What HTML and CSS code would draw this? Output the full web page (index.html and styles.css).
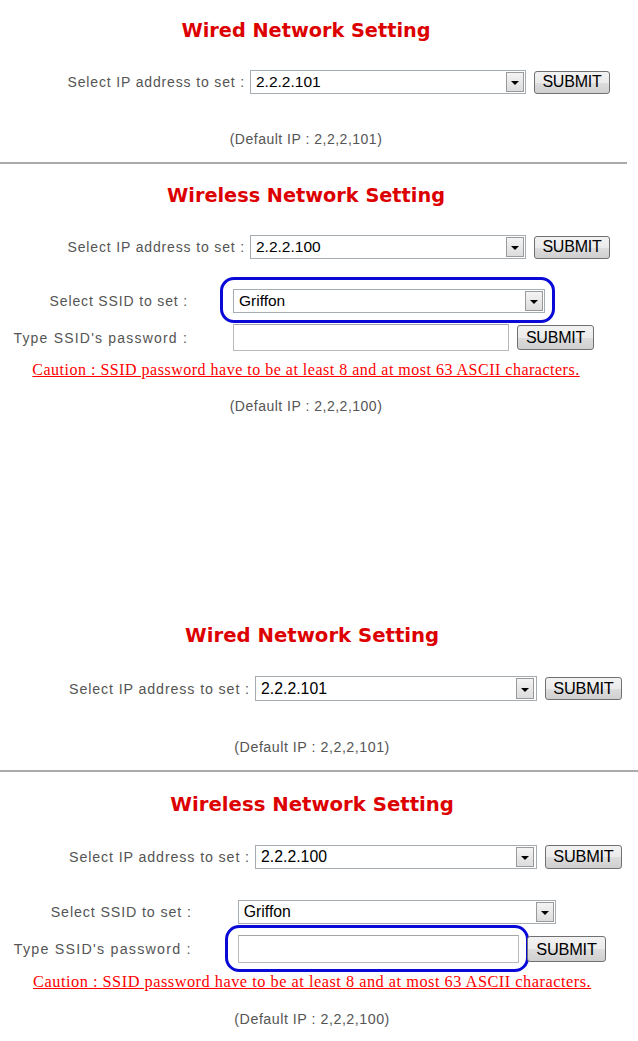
FILE: index.html
```html
<!DOCTYPE html>
<html lang="en">

<head>
    <meta charset="UTF-8">
    <meta name="viewport" content="width=device-width, initial-scale=1.0">
    <title>Network Setting</title>
    <link rel="stylesheet" href="styles.css">
</head>

<body>
    <div class="shot">
        <div class="block">
            <h2 class="title">Wired Network Setting</h2>
            <div class="row">
                <span class="label label-ip">Select IP address to set :</span>
                <span class="select select-ip">2.2.2.101<span class="arrow"></span></span>
                <button class="submit">SUBMIT</button>
            </div>
            <p class="default">(Default IP : 2,2,2,101)</p>
        </div>
        <hr>
        <div class="block block-wireless">
            <h2 class="title">Wireless Network Setting</h2>
            <div class="row">
                <span class="label label-ip">Select IP address to set :</span>
                <span class="select select-ip">2.2.2.100<span class="arrow"></span></span>
                <button class="submit">SUBMIT</button>
            </div>
            <div class="row row-ssid">
                <span class="label label-ssid">Select SSID to set :</span>
                <span class="mark">
                    <span class="select select-ssid">Griffon<span class="arrow"></span></span>
                </span>
            </div>
            <div class="row row-pass">
                <span class="label label-ssid label-pass">Type SSID's password :</span>
                <span class="input"></span>
                <button class="submit submit-pass">SUBMIT</button>
            </div>
            <p class="caution">Caution : SSID password have to be at least 8 and at most 63 ASCII characters.</p>
            <p class="default default-last">(Default IP : 2,2,2,100)</p>
        </div>
    </div>

    <div class="shot shot-second">
        <div class="block">
            <h2 class="title">Wired Network Setting</h2>
            <div class="row">
                <span class="label label-ip">Select IP address to set :</span>
                <span class="select select-ip">2.2.2.101<span class="arrow"></span></span>
                <button class="submit">SUBMIT</button>
            </div>
            <p class="default">(Default IP : 2,2,2,101)</p>
        </div>
        <hr>
        <div class="block block-wireless">
            <h2 class="title">Wireless Network Setting</h2>
            <div class="row">
                <span class="label label-ip">Select IP address to set :</span>
                <span class="select select-ip">2.2.2.100<span class="arrow"></span></span>
                <button class="submit">SUBMIT</button>
            </div>
            <div class="row row-ssid">
                <span class="label label-ssid">Select SSID to set :</span>
                <span class="select select-ssid">Griffon<span class="arrow"></span></span>
            </div>
            <div class="row row-pass">
                <span class="label label-ssid label-pass">Type SSID's password :</span>
                <span class="mark mark-input">
                    <span class="input"></span>
                </span>
                <button class="submit submit-pass">SUBMIT</button>
            </div>
            <p class="caution">Caution : SSID password have to be at least 8 and at most 63 ASCII characters.</p>
            <p class="default default-last">(Default IP : 2,2,2,100)</p>
        </div>
    </div>
</body>

</html>
```

FILE: styles.css
```css
body {
    margin: 0;
    background-color: #ffffff;
    font-family: "Liberation Sans", Arial, sans-serif;
    overflow: hidden;
}

.shot {
    width: 627px;
    height: 605px;
}

/* second capture is a little bigger */
.shot-second {
    zoom: 1.02;
    height: 430px;
}

.block {
    padding-right: 15px;
    padding-top: 19px;
}

.block-wireless {
    padding-top: 20px;
}

hr {
    margin: 15px 0 0 0;
    height: 2px;
    border: none;
    background-color: #aaaaaa;
}

.title {
    margin: 0;
    text-align: center;
    font-family: "DejaVu Sans", Verdana, sans-serif;
    font-size: 19.3px;
    line-height: 24px;
    font-weight: bold;
    color: #dd0000;
}

.row {
    display: flex;
    align-items: center;
    margin-top: 27px;
    height: 24px;
}

.label {
    text-align: right;
    font-size: 14px;
    color: #555555;
    letter-spacing: 0.85px;
    white-space: nowrap;
}

.label-ip {
    width: 245px;
    margin-right: 5px;
}

.label-ssid {
    width: 188px;
    margin-right: 45px;
}

.label-pass {
    letter-spacing: 1.2px;
}

.select {
    display: flex;
    align-items: center;
    box-sizing: border-box;
    height: 24px;
    padding-left: 5px;
    border: 1px solid #a5acb2;
    font-size: 15.5px;
    color: #000000;
    position: relative;
}

.select-ip {
    width: 276px;
}

.select-ssid {
    width: 312px;
}

.arrow {
    position: absolute;
    right: 1px;
    top: 1px;
    bottom: 1px;
    width: 18px;
    box-sizing: border-box;
    border: 1px solid #9a9a9a;
    background: linear-gradient(#f4f4f4, #dcdcdc);
}

.arrow::after {
    content: "";
    position: absolute;
    left: 4px;
    top: 8px;
    border-left: 4px solid transparent;
    border-right: 4px solid transparent;
    border-top: 4px solid #000000;
}

.submit {
    margin-left: 8px;
    width: 76px;
    height: 23px;
    padding: 0;
    border: 1px solid #707070;
    border-radius: 3px;
    background: linear-gradient(#f2f2f2, #ebebeb 50%, #dddddd 51%, #cfcfcf);
    font-family: "Liberation Sans", Arial, sans-serif;
    font-size: 16px;
    color: #000000;
    letter-spacing: -0.2px;
}

.row-ssid {
    margin-top: 30px;
}

.row-pass {
    margin-top: 11px;
    height: 27px;
}

.input {
    display: block;
    box-sizing: border-box;
    width: 276px;
    height: 27px;
    border: 1px solid #b9b9b9;
    border-top-color: #a5a5a5;
    background-color: #ffffff;
}

.submit-pass {
    width: 77px;
    height: 25px;
}

/* blue circle drawn around the control that is talked about */
.mark {
    display: block;
    margin: -12px -10px -10px -13px;
    padding: 9px 7px 7px 10px;
    border: 3px solid #0a0ad8;
    border-radius: 14px;
}

.mark-input {
    margin: -10px -10px -9px -12px;
    padding: 7px 7px 6px 9px;
}

.caution {
    margin: 10px 0 0 0;
    text-align: center;
    font-family: "Liberation Serif", "Times New Roman", serif;
    font-size: 16px;
    line-height: 18px;
    letter-spacing: 0.5px;
    color: #ff0000;
    text-decoration: underline;
}

.default {
    margin: 37px 0 0 0;
    text-align: center;
    font-size: 14px;
    line-height: 16px;
    letter-spacing: 0.5px;
    color: #555555;
}

.default-last {
    margin-top: 19px;
}
```
